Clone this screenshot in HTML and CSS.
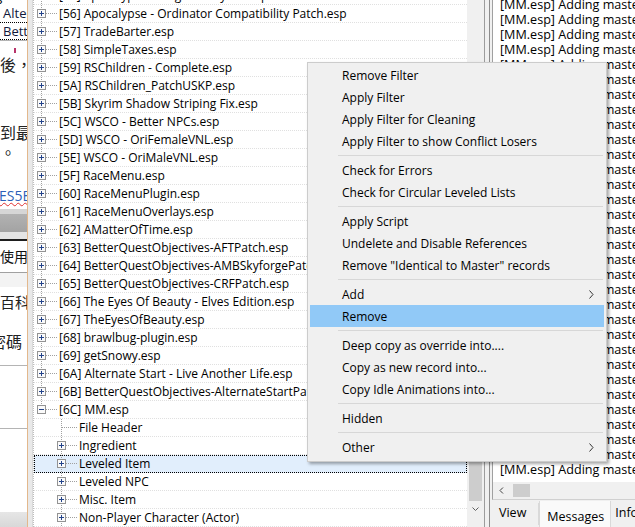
FILE: index.html
```html
<!DOCTYPE html>
<html lang="en">
<head>
    <meta charset="UTF-8">
    <title>xEdit - MM.esp</title>
    <link rel="stylesheet" href="styles.css">
</head>
<body>
    <div class="desktop">
        <!-- window behind, only its right edge shows -->
        <div class="behind">
            <div class="bh-cut"><span>Clothing</span></div>
            <div class="bh-item">Alternate</div>
            <div class="bh-item focus">BetterQuest</div>
            <div class="bh-rule"></div>
            <div class="bh-mark"></div>
            <div class="cjk first">後，會</div>
            <div class="cjk gap-lg">到最新</div>
            <div class="cjk">。</div>
            <div class="bh-link">ES5Edit</div>
            <div class="bh-bar"></div>
            <div class="bh-field">使用者</div>
            <div class="bh-strip"></div>
            <div class="cjk gap-sm">百科全</div>
            <div class="cjk shifted">密碼</div>
            <div class="bh-rule gap-a"></div>
            <div class="bh-rule gap-b"></div>
            <div class="bh-foot"></div>
        </div>
        <div class="behind-edge"></div>

        <div class="tree-pane">
            <div class="tree" id="tree"></div>
            <div class="vscroll">
                <div class="vthumb"></div>
                <div class="varrow">
                    <svg width="7" height="5" viewBox="0 0 7 5"><path d="M0.5 0.5 L3.5 3.5 L6.5 0.5" fill="none" stroke="#606060"/></svg>
                </div>
            </div>
        </div>

        <div class="splitter"></div>

        <div class="msg-pane">
            <div class="msg-box">
                <div class="msg-list" id="messages"></div>
                <div class="hscroll">
                    <div class="harrow">
                        <svg width="5" height="7" viewBox="0 0 5 7"><path d="M4 0.5 L1 3.5 L4 6.5" fill="none" stroke="#404040"/></svg>
                    </div>
                    <div class="hthumb"></div>
                </div>
            </div>
            <div class="tabs">
                <div class="tab">View</div>
                <div class="tab active">Messages</div>
                <div class="tab">Information</div>
            </div>
        </div>

        <div class="context-menu">
            <div class="menu-item">Remove Filter</div>
            <div class="menu-item">Apply Filter</div>
            <div class="menu-item">Apply Filter for Cleaning</div>
            <div class="menu-item">Apply Filter to show Conflict Losers</div>
            <div class="menu-sep"></div>
            <div class="menu-item">Check for Errors</div>
            <div class="menu-item">Check for Circular Leveled Lists</div>
            <div class="menu-sep"></div>
            <div class="menu-item">Apply Script</div>
            <div class="menu-item">Undelete and Disable References</div>
            <div class="menu-item">Remove "Identical to Master" records</div>
            <div class="menu-sep"></div>
            <div class="menu-item">Add
                <svg class="sub" width="5" height="9" viewBox="0 0 5 9"><path d="M0.5 0.5 L4 4.5 L0.5 8.5" fill="none" stroke="#333"/></svg>
            </div>
            <div class="menu-item hot">Remove</div>
            <div class="menu-sep"></div>
            <div class="menu-item">Deep copy as override into....</div>
            <div class="menu-item">Copy as new record into...</div>
            <div class="menu-item">Copy Idle Animations into...</div>
            <div class="menu-sep"></div>
            <div class="menu-item">Hidden</div>
            <div class="menu-sep"></div>
            <div class="menu-item">Other
                <svg class="sub" width="5" height="9" viewBox="0 0 5 9"><path d="M0.5 0.5 L4 4.5 L0.5 8.5" fill="none" stroke="#333"/></svg>
            </div>
        </div>
    </div>

    <script>
        const plugins = [
            "[55] Apocalypse - Magic of Skyrim.esp",
            "[56] Apocalypse - Ordinator Compatibility Patch.esp",
            "[57] TradeBarter.esp",
            "[58] SimpleTaxes.esp",
            "[59] RSChildren - Complete.esp",
            "[5A] RSChildren_PatchUSKP.esp",
            "[5B] Skyrim Shadow Striping Fix.esp",
            "[5C] WSCO - Better NPCs.esp",
            "[5D] WSCO - OriFemaleVNL.esp",
            "[5E] WSCO - OriMaleVNL.esp",
            "[5F] RaceMenu.esp",
            "[60] RaceMenuPlugin.esp",
            "[61] RaceMenuOverlays.esp",
            "[62] AMatterOfTime.esp",
            "[63] BetterQuestObjectives-AFTPatch.esp",
            "[64] BetterQuestObjectives-AMBSkyforgePatch.esp",
            "[65] BetterQuestObjectives-CRFPatch.esp",
            "[66] The Eyes Of Beauty - Elves Edition.esp",
            "[67] TheEyesOfBeauty.esp",
            "[68] brawlbug-plugin.esp",
            "[69] getSnowy.esp",
            "[6A] Alternate Start - Live Another Life.esp",
            "[6B] BetterQuestObjectives-AlternateStartPatch.esp"
        ];

        const groups = ["Ingredient", "Leveled Item", "Leveled NPC", "Misc. Item", "Non-Player Character (Actor)"];

        const tree = document.getElementById("tree");

        function boxSvg(open) {
            let d = open ? "M2 4.5h5" : "M2 4.5h5M4.5 2v5";
            return '<svg class="exp" width="9" height="9" viewBox="0 0 9 9">' +
                '<rect x="0.5" y="0.5" width="8" height="8" fill="#fafafa" stroke="#939393"/>' +
                '<path d="' + d + '" stroke="#23438a"/></svg>';
        }

        function addRow(label, opts) {
            const row = document.createElement("div");
            row.className = "row" + (opts.selected ? " selected" : "");
            if (opts.child) {
                const indent = document.createElement("span");
                indent.className = "indent";
                row.appendChild(indent);
            }
            const node = document.createElement("span");
            node.className = "node" + (opts.last ? " last" : "");
            if (opts.box) node.innerHTML = boxSvg(opts.box === "-");
            row.appendChild(node);
            const text = document.createElement("span");
            text.className = "label";
            text.textContent = label;
            row.appendChild(text);
            tree.appendChild(row);
        }

        plugins.forEach(name => addRow(name, { box: "+" }));
        addRow("[6C] MM.esp", { box: "-", last: true });
        addRow("File Header", { child: true });
        groups.forEach(name => {
            addRow(name, { child: true, box: "+", selected: name === "Leveled Item" });
        });

        // message log
        const messages = document.getElementById("messages");
        for (let i = 0; i < 32; i++) {
            const line = document.createElement("div");
            line.className = "msg";
            line.textContent = '[MM.esp] Adding master "Skyrim.esm"';
            messages.appendChild(line);
        }
    </script>
</body>
</html>
```

FILE: styles.css
```css
* {
    margin: 0;
    padding: 0;
    box-sizing: border-box;
}

body {
    width: 635px;
    height: 527px;
    overflow: hidden;
    font-family: "Open Sans", "Noto Sans", sans-serif;
    font-size: 12px;
    color: #000;
    background-color: #f0f0f0;
}

.desktop {
    position: relative;
    display: flex;
    width: 635px;
    height: 527px;
    overflow: hidden;
}

/* window behind */
.behind {
    width: 27px;
    flex: none;
    display: flex;
    flex-direction: column;
    overflow: hidden;
    background-color: #fff;
    white-space: nowrap;
}

.bh-cut {
    height: 4px;
    overflow: hidden;
    font-size: 13px;
    line-height: 16px;
}

.bh-cut span {
    display: block;
    margin-top: -12px;
    margin-left: -48px;
}

.bh-item {
    height: 18px;
    line-height: 18px;
    padding-left: 3px;
    font-size: 13px;
    color: #10183a;
}

.bh-item.focus {
    border-top: 1px dotted #000;
    border-bottom: 1px dotted #000;
    line-height: 16px;
}

.bh-rule {
    height: 1px;
    flex: none;
    background-color: #b4b4b4;
}

.bh-mark {
    width: 2px;
    height: 5px;
    margin: 7px 0 0 14px;
    background-color: #b8336a;
}

.cjk {
    font-family: "Noto Sans CJK TC", sans-serif;
    font-size: 16px;
    line-height: 20px;
    color: #222;
}

.cjk.first {
    margin-top: 1px;
}

.cjk.gap-lg {
    margin-top: 48px;
}

.cjk.gap-sm {
    margin-top: 4px;
    font-size: 15px;
    line-height: 22px;
}

.cjk.shifted {
    margin: 18px 0 0 -10px;
}

.bh-link {
    margin: 25px 0 0 -1px;
    font-size: 14px;
    line-height: 18px;
    color: #2c5fb8;
    text-decoration: underline wavy #e03030;
    text-decoration-thickness: 1px;
}

.bh-bar {
    height: 32px;
    flex: none;
    margin-top: 4px;
    background: linear-gradient(to bottom, #d6d6d6 0 5px, #b2b2b2 5px, #a3a3a3 23px, #e4e4e4 23px 30px, #1e1e1e 30px);
}

.bh-field {
    height: 32px;
    flex: none;
    font-family: "Noto Sans CJK TC", sans-serif;
    font-size: 14px;
    line-height: 31px;
    border-bottom: 1px solid #a0a0a0;
    color: #111;
}

.bh-strip {
    height: 14px;
    flex: none;
    background-color: #f3f3f3;
}

.bh-rule.gap-a {
    margin-top: 14px;
}

.bh-rule.gap-b {
    margin-top: 62px;
}

.bh-foot {
    margin-top: auto;
    height: 15px;
    flex: none;
    background: linear-gradient(to bottom, #e6e6e6, #d8d8d8);
}

.behind-edge {
    width: 5px;
    flex: none;
    border-left: 1px solid #e3b88c;
    background-color: #e9e9e9;
}

/* tree view */
.tree-pane {
    width: 453px;
    flex: none;
    display: flex;
    border-left: 1px solid #d8d8d8;
    border-right: 1px solid #9c9c9c;
    background-color: #fff;
}

.tree {
    flex: 1;
    min-width: 0;
    overflow: hidden;
    border-left: 1px dotted #bdbdbd;
}

.row {
    display: flex;
    height: 18px;
    border-bottom: 1px dotted #e0e0e0;
    white-space: nowrap;
}

.row:first-child {
    margin-top: -13px;
}

.row.selected {
    background-color: #e1eefc;
    outline: 1px dotted #000;
    outline-offset: -1px;
}

.indent {
    width: 20px;
    flex: none;
}

.node {
    width: 25px;
    flex: none;
    display: flex;
    align-items: center;
    background-image:
        repeating-linear-gradient(to bottom, #a0a0a0 0 1px, transparent 1px 2px),
        repeating-linear-gradient(to right, #a0a0a0 0 1px, transparent 1px 2px);
    background-repeat: no-repeat;
    background-size: 1px 100%, 15px 1px;
    background-position: 7px 0, 8px 8px;
}

.node.last {
    background-size: 1px 9px, 15px 1px;
}

.exp {
    margin-left: 3px;
    display: block;
}

.label {
    line-height: 17px;
}

.vscroll {
    width: 17px;
    flex: none;
    display: flex;
    flex-direction: column;
    align-items: center;
    background-color: #f0f0f0;
}

.vthumb {
    width: 13px;
    height: 172px;
    margin-top: auto;
    background-color: #cdcdcd;
}

.varrow {
    height: 17px;
    margin-bottom: 9px;
    display: flex;
    align-items: center;
}

.splitter {
    width: 4px;
    flex: none;
    background-color: #f0f0f0;
}

/* message log */
.msg-pane {
    flex: 1;
    min-width: 0;
    display: flex;
    flex-direction: column;
    border-left: 1px solid #8c8c8c;
    padding-left: 2px;
}

.msg-box {
    border-left: 1px solid #a0a0a0;
    border-bottom: 1px solid #d0d0d0;
    background-color: #fff;
}

.msg-list {
    height: 482px;
    overflow: hidden;
    padding-left: 7px;
}

.msg {
    height: 15px;
    line-height: 15px;
    font-size: 12.6px;
    white-space: nowrap;
}

.msg:first-child {
    margin-top: -3px;
}

.hscroll {
    height: 17px;
    display: flex;
    align-items: center;
    background-color: #f0f0f0;
}

.harrow {
    width: 17px;
    display: flex;
    justify-content: center;
}

.hthumb {
    width: 17px;
    height: 13px;
    margin-left: 3px;
    background-color: #cdcdcd;
}

.tabs {
    display: flex;
    align-items: flex-start;
    padding-left: 3px;
    margin-top: 3px;
    font-size: 12.5px;
}

.tab {
    height: 22px;
    padding: 0 12px 0 4px;
    line-height: 20px;
    border-right: 1px solid #d9d9d9;
    white-space: nowrap;
}

.tab.active {
    height: 26px;
    margin-top: -2px;
    padding: 6px 6px 0 7px;
    background-color: #fafafa;
    border-left: 1px solid #d9d9d9;
}

/* popup menu */
.context-menu {
    position: absolute;
    left: 307px;
    top: 62px;
    width: 300px;
    padding: 1px 2px 3px 2px;
    background-color: #f0f0f0;
    border: 1px solid #cccccc;
    box-shadow: 2px 2px 3px rgba(0, 0, 0, 0.35);
}

.menu-item {
    display: flex;
    align-items: center;
    height: 22px;
    padding-left: 32px;
    white-space: nowrap;
}

.menu-item.hot {
    background-color: #91c9f7;
}

.sub {
    margin-left: auto;
    margin-right: 10px;
}

.menu-sep {
    height: 7px;
    margin: 0 1px 0 28px;
    background: linear-gradient(#d7d7d7, #d7d7d7) no-repeat 0 3px / 100% 1px;
}
```
